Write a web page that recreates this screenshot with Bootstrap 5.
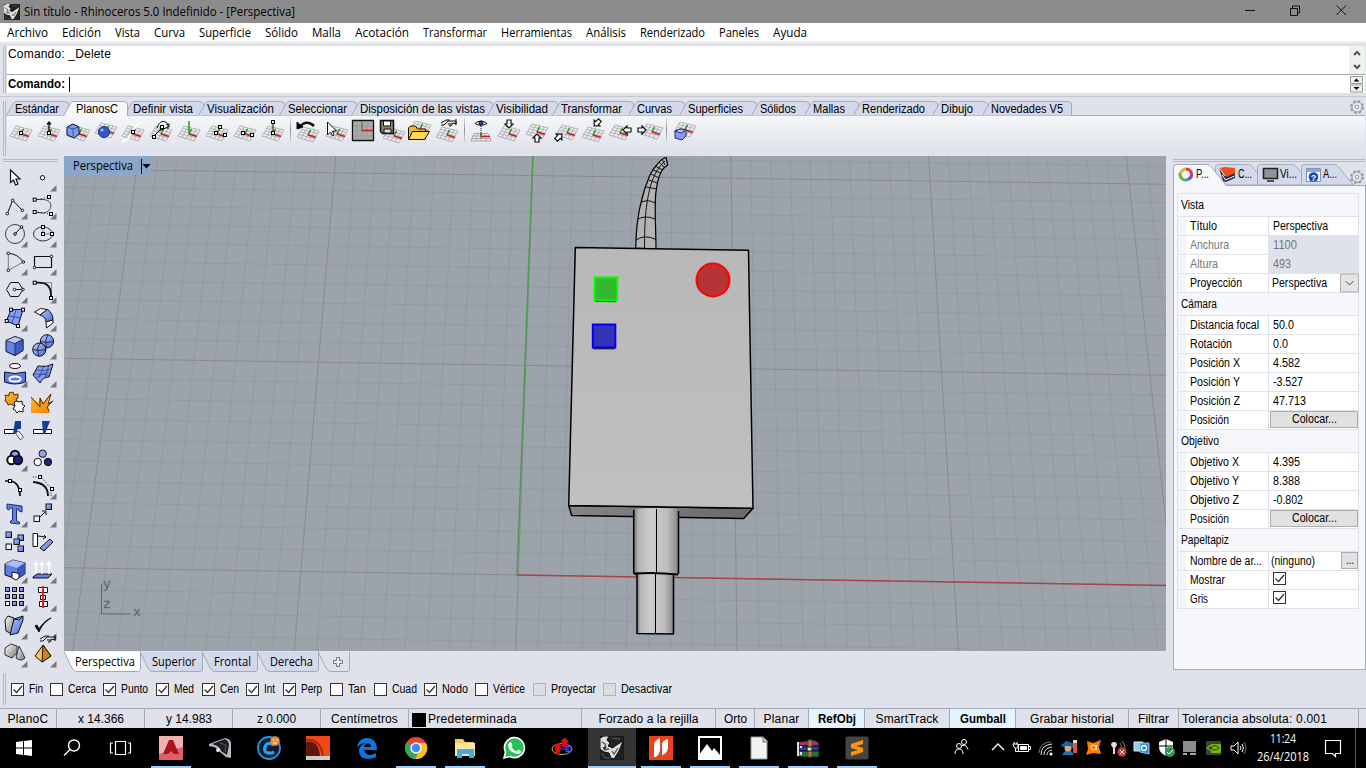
<!DOCTYPE html>
<html lang="es">
<head>
<meta charset="utf-8">
<title>Sin título - Rhinoceros 5.0 Indefinido</title>
<link href="https://cdn.jsdelivr.net/npm/bootstrap@5.3.0/dist/css/bootstrap.min.css" rel="stylesheet">
<style>
:root{--chrome:#dfe2ea;--edge:#a3a9b8;--tabc:#d3d9ea}
body{width:1366px;height:768px;overflow:hidden;background:var(--chrome);color:#000;font:12px/16px "Liberation Sans",sans-serif}
svg{display:block;flex:none;overflow:visible}
.segoe{font-family:"Open Sans",sans-serif}
.txt{white-space:nowrap;display:inline-block;transform-origin:0 50%}
.titlebar{height:23px;background:#8c8c8c}
.menubar{height:20px;background:#fff;border-bottom:2px solid #f0f0f0}
.menubar .cell{flex:none}
.cmd{height:53px;padding:3px 1px 3px 3px}
.grip{width:3px;border-left:1px solid #b4b9c5;border-right:1px solid #b4b9c5;margin-right:1px;flex:none}
.history{height:29px;background:#fff;border-bottom:1px solid var(--edge)}
.prompt-line{height:18px;background:#fff;font-weight:bold}
.ribbon{height:60px;border-top:1px solid #c3c8d4;padding:4px 1px 0 3px}
.tabs-top{height:15px;border-bottom:1px solid var(--edge)}
.tabshape{position:absolute;left:0;top:0}
.onTop{position:relative;z-index:1}
.tools-top{height:40px;padding-top:1px;background:linear-gradient(#f6f7f9,#dfe2ea 85%)}
.sep{width:6px;height:26px}
.sep::before{content:"";display:block;width:1px;height:26px;margin-left:3px;background:linear-gradient(#dfe2ea,#8c8f98,#dfe2ea)}
.main{height:517px}
.left{width:64px;padding-top:3px}
.hgrip{height:3px;width:55px;margin-left:3px;border-top:1px solid #b4b9c5;border-bottom:1px solid #b4b9c5}
.toolgrid{display:grid;grid-template-columns:29px 29px;grid-auto-rows:28px;margin-top:2px}
.view{width:1102px;height:495px;position:relative;background:#9da3ab}
.viewlabel{position:absolute;left:0;top:0;width:87px;height:19px;background:#8ba6c8;padding:2px 0 0 9px}
.right{width:193px;margin-left:7px;padding-top:3px}
.rtabs{height:21px;margin-top:2px}
.panel{height:485px;border:1px solid var(--edge);background:#f6f7fa;padding:7px 5px 0 3px}
.props{border:1px solid var(--chrome);width:182px;height:416px}
.phead{height:23px;padding:3px;border-bottom:1px solid var(--chrome)}
.prow{height:19px;border-bottom:1px solid var(--chrome);background:#fff;line-height:18px}
.prow .gut{width:8px;background:#f3f5f9}
.prow .nam{width:83px;padding-left:4px;border-right:1px solid var(--chrome)}
.prow .val{padding-left:4px;flex:1}
.dis{color:#74767c}.dis .val{background:var(--chrome)}
.flatbtn{border:1px solid #adadad;background:#e1e1e1;height:17px;line-height:15px;margin-left:1px;flex:1;text-align:center}
.osnap{height:35px;padding:0 0 3px 3px}
.chk{width:13px;height:13px;border:1px solid #333;background:#fff;flex:none}
.chk.off{border-color:#b4b4b4;background:#dcdddf}
.status{height:20px;border-top:1px solid var(--edge);font-size:12px;line-height:20px}
.status .cell{border-right:1px solid var(--edge);flex:none}
.status .hot{background:#e5f3ff;font-weight:bold}
.task{height:40px;background:#000;color:#fff}
.task .app{width:49px;height:40px;padding-top:8px;position:relative;flex:none}
.task .run{box-shadow:inset 0 -2px #99cdfa;width:40px;margin:0 4.5px}
.task .run2{background:#343434;width:48px;box-shadow:inset 0 -2px #99cdfa;margin:0 .5px}
</style>
</head>
<body class="d-flex flex-column">
<header class="titlebar d-flex align-items-center segoe">
  <svg class="ms-1" width="16" height="16" viewBox="0 0 24 24"><use href="#rhino"/></svg>
  <span class="txt" data-w="271" style="margin-left:4px">Sin título - Rhinoceros 5.0 Indefinido - [Perspectiva]</span>
  <svg class="ms-auto" width="124" height="23" fill="none" stroke="#111"><path d="M3 10.5h10M48.500 8.500h7v7h-7zM50.500 8v-2h7v7h-2M94.500 5.500l9.500 9.500M104 5.500l-9.500 9.500"/></svg>
</header>
<nav class="menubar d-flex segoe" id="menu"></nav>
<section class="cmd d-flex">
  <div class="grip"></div>
  <div class="flex-fill">
    <div class="history d-flex"><span class="txt" data-w="103" style="margin-left:1px">Comando: _Delete</span>
      <svg class="ms-auto" width="16" height="28"><rect width="16" height="28" fill="#f0f0f0"/><path d="M5 9l3-3 3 3M5 19l3 3 3-3" fill="none" stroke="#505050" stroke-width="2"/></svg></div>
    <div class="prompt-line d-flex align-items-center"><span class="txt" data-w="57" style="margin-left:1px">Comando:</span><i style="width:1px;height:15px;background:#000;margin-left:4px"></i>
      <svg class="ms-auto" width="16" height="19"><path d="M1.500 1.500h12v7h-12zM1.500 10h12v7h-12z" fill="#f0f0f0" stroke="#999"/><path d="M4.500 6.500h6l-3-3zM4.500 12h6l-3 3z"/></svg></div>
  </div>
</section>
<section class="ribbon d-flex">
  <div class="grip"></div>
  <div class="flex-fill">
    <div class="tabs-top d-flex" id="toptabs"></div>
    <div class="tools-top d-flex" id="toptools"></div>
  </div>
</section>
<main class="main d-flex">
  <aside class="left flex-shrink-0"><div class="hgrip"></div><div class="toolgrid" id="lefttools"></div></aside>
  <div class="d-flex flex-column flex-shrink-0">
    <div class="view">
      <svg width="1102" height="495" viewBox="64 156 1102 495" style="overflow:hidden">
        <defs>
          <linearGradient id="cyl"><stop offset="0" stop-color="#777"/><stop offset=".1" stop-color="#b5b5b5"/><stop offset=".38" stop-color="#ccccd0"/><stop offset=".75" stop-color="#bdbdbd"/><stop offset=".93" stop-color="#989898"/><stop offset="1" stop-color="#777"/></linearGradient>
          <linearGradient id="face" x2="0" y2="1"><stop stop-color="#b8b8b9"/><stop offset="1" stop-color="#c0c0c2"/></linearGradient>
          <linearGradient id="under"><stop stop-color="#858585"/><stop offset="1" stop-color="#6b6b6b"/></linearGradient>
        </defs>
        <g id="grid" fill="none"></g>
        <path d="M532.800 156L517 575" stroke="#4a9f4e" stroke-width="1.500"/><path d="M517 575L1166 585.500" stroke="#ab4448" stroke-width="1.500"/>
        <g stroke="#000" stroke-linejoin="round">
          <path fill="#b3b3b4" stroke-width="1.200" d="M635.700 248C636 238 636.500 229 637.700 220C639 210 640 206 641.700 200C644 190 645 187 648 180C650 174 653 169 656.700 165Q661 159 666 157.500L667.700 165C664 167 662 170 660.700 173C658 178 657.500 182 656.700 187C655.500 193 655.300 198 655.300 203C655 220 656 235 656 249z"/>
          <path fill="none" stroke-width=".9" d="M644.500 248C644.500 220 646 205 649.500 190C652 179 657 168 665 161M636 240q9-6 20-.5M638 219q8-4 17 0M641.500 202q7-3 13.500 1M646 187l11 2M648.500 180l9 3M651 174l8 4M653 170l8 3M655.500 166l7 4M659 162l5 5M662 159l3 6"/>
          <path fill="url(#under)" stroke-width="1.500" d="M568.700 505.500L753 508.200L743.700 518.500L571.700 515.500z"/>
          <path fill="url(#face)" stroke-width="1.500" d="M575.300 247.500L748.500 250.300L753 508.200L568.700 505.500z"/>
          <path fill="url(#cyl)" stroke="none" d="M636.700 573h37v61l-37-.5z"/><path fill="none" stroke-width="1.500" d="M637 574v59.500l36.500.5V574"/><path d="M655.500 574v60"/>
          <path fill="url(#cyl)" stroke="none" d="M634 509q22-2 44.500 0v65h-44.500z"/><path fill="none" stroke-width="1.500" d="M633.700 510v63l2.500 1.500M678.500 511v63"/>
          <path fill="none" stroke-width="1" d="M656.500 509v64"/><path fill="none" stroke-width="2" d="M634 573.500q22-1.500 44 1"/>
        </g>
        <path d="M594.800 277.500h22.500l-.3 23-22.500-.5z" fill="#32b931" stroke="#0f0" stroke-width="2"/><path d="M595 301.300l21 .5" stroke="#080"/>
        <path d="M592.800 324.500h22.500v23h-22.500z" fill="#3333b8" stroke="#00f" stroke-width="2"/><path d="M593 348.800h22" stroke="#002"/>
        <circle cx="713" cy="280" r="16.500" fill="#b83335" stroke="#f00" stroke-width="2"/>
        <path d="M101.500 584v30h29" fill="none" stroke="#63666b"/>
        <g fill="#63666b" font-family="Liberation Mono,monospace" font-size="13" stroke="#63666b" stroke-width=".3"><text x="103" y="588">y</text><text x="103" y="608">z</text><text x="133" y="616">x</text></g>
      </svg>
      <div class="viewlabel d-flex segoe"><span class="txt" data-w="60">Perspectiva</span><svg width="20" height="18"><path d="M8.500 1v15" stroke="#000"/><path d="M9.500 6h8l-4 4.500z"/></svg></div>
    </div>
    <div class="d-flex segoe" id="viewtabs"></div>
  </div>
  <aside class="right flex-shrink-0">
    <div class="hgrip" style="width:192px;margin-left:0"></div>
    <div class="rtabs d-flex">
      <svg width="193" height="21" viewBox="1173 164 193 21">
        <g stroke="#a3a9b8">
          <path fill="#d3d9ea" d="M1301.500 185V167q0-2.500 3-2.500h30q2 0 4 2.500l15 18z"/>
          <path fill="#d3d9ea" d="M1257.500 185V167q0-2.500 3-2.500h32q2 0 4 2.500l5 6v12z"/>
          <path fill="#d3d9ea" d="M1215.500 185V167q0-2.500 3-2.500h30q2 0 4 2.500l5 6v12z"/>
          <path fill="#f6f7fa" d="M1173.500 186V167q0-2.500 3-2.500h31q2 0 4 2.500l15 19"/>
        </g>
        <g fill="none" stroke-width="3"><path stroke="#e33" d="M1186 169a5.500 5.500 0 0 1 5.500 5.500"/><path stroke="#e5b730" d="M1181 172.500a5.500 5.500 0 0 1 5-3.500"/><path stroke="#6bb63c" d="M1186 180a5.500 5.500 0 0 1-5.500-7.500"/><path stroke="#3798cf" d="M1186 180a5.500 5.500 0 0 0 4-2"/><path stroke="#9c3fae" d="M1189 179a5.500 5.500 0 0 0 2.500-5"/></g>
        <path d="M1219 168l4 13 3 1 9-4v-5l-11 3z" fill="#272d48"/><path d="M1220 168l5-1 10 1v5l-9 4z" fill="#f14e1e"/><path d="M1222 175l3.500 5 9-4" stroke="#fff" fill="none"/>
        <path d="M1263.500 168.500h14v10h-14z" fill="#8d949b" stroke="#222" stroke-width="1.600"/><path d="M1267 181h7" stroke="#222" stroke-width="1.500"/>
        <path d="M1306.500 168.500h14v13h-14z" fill="#fff" stroke="#8091c6"/><path d="M1307 169h13v3h-13z" fill="#91a5dc"/><circle cx="1313.500" cy="177" r="4.800" fill="#1748b8"/><text x="1310.800" y="180.500" fill="#fff" font-size="9" font-weight="bold">?</text>
        <g font-size="12"><text x="1196" y="178" textLength="13" lengthAdjust="spacingAndGlyphs">P...</text><text x="1238" y="178" textLength="14" lengthAdjust="spacingAndGlyphs">C...</text><text x="1280" y="178" textLength="17" lengthAdjust="spacingAndGlyphs">Vi...</text><text x="1323" y="178" textLength="14" lengthAdjust="spacingAndGlyphs">A...</text></g>
        <use href="#gear" x="1350" y="170"/>
      </svg>
    </div>
    <div class="panel"><div class="props" id="props"></div></div>
  </aside>
</main>
<section class="osnap d-flex"><div class="grip"></div><div class="d-flex align-items-center" id="osnap"></div></section>
<section class="status d-flex" id="status"></section>
<footer class="task d-flex segoe" id="task"></footer>

<svg width="0" height="0" class="position-absolute">
  <defs>
    <symbol id="gear" width="14" height="14" viewBox="0 0 14 14"><circle cx="7" cy="7" r="6" fill="none" stroke="#8f939a" stroke-width="1.600" stroke-dasharray="2.700 2.010"/><circle cx="7" cy="7" r="5" fill="#e4e6eb" stroke="#9a9ea5"/><circle cx="7" cy="7" r="1.700" fill="#fff" stroke="#8f939a"/></symbol>
    <symbol id="rhino" width="24" height="24" viewBox="0 0 24 24"><rect width="24" height="24" fill="#222"/><path d="M0 2l4-2h5L7 4l3 3-2 3 5 2 2-2 8-5-4 10-5 8-3-1-2-5-5-1-4-3z" fill="#ddd"/><path d="M2 6l3 2 1 4M12 15l2 3 4-6M4 14l5-1" stroke="#555" fill="none" stroke-width="1.300"/><path d="M1 17l4 5h5M12 2l8 1" stroke="#5a5a5a" fill="none"/><circle cx="4.500" cy="12" r="1" fill="#b22"/></symbol>
    <symbol id="mesh" width="28" height="28" viewBox="0 0 28 28"><path d="M9 9l16 4M8 11.500l15.500 4M6.500 14l15.500 4M5 16.500l15.500 4M3 19l16 5M9 9L3 19M13 10L7 20.500M17 11l-6 11M21 12l-6 11M25 13l-6 11" fill="none" stroke="#a9abaf" stroke-width=".9"/><path d="M14 17l2.500-5" stroke="#149614" stroke-width="1.400"/><path d="M14 17l8 2.500" stroke="#d3161c" stroke-width="1.600"/></symbol>
    <linearGradient id="bl" x2="1" y2="1"><stop stop-color="#b8caff"/><stop offset="1" stop-color="#4668dc"/></linearGradient>
    <linearGradient id="or" x2="1" y2="1"><stop stop-color="#ffc52a"/><stop offset="1" stop-color="#ee7b08"/></linearGradient>
    <linearGradient id="gr" x2="1" y2="1"><stop stop-color="#fff"/><stop offset="1" stop-color="#777"/></linearGradient>
  </defs>
</svg>
<script src="https://cdn.jsdelivr.net/npm/bootstrap@5.3.0/dist/js/bootstrap.bundle.min.js"></script>
<script>
const $ = id => document.getElementById(id);
const put = (id, html) => { $(id).innerHTML = html; };
const svg = (body, s = 28) => `<svg width="${s}" height="${s}" viewBox="0 0 ${s} ${s}" fill="none" stroke="#111">${body}</svg>`;
const sq = (...p) => p.map(([x, y, f]) => `<rect x="${x - 1.5}" y="${y - 1.5}" width="3" height="3" fill="${f || '#fff'}" stroke="#000"/>`).join('');
const dot = (...p) => p.map(([x, y]) => `<circle cx="${x}" cy="${y}" r="1.300" fill="#fff"/>`).join('');
const mesh = (x = 0, y = 0) => `<use href="#mesh" x="${x}" y="${y}"/>`;
const text = (t, w) => `<span class="txt" data-w="${w}">${t}</span>`;

/* menu: label, left edge, text width */
let rows = [['Archivo',7,41],['Edición',62,39],['Vista',115,25],['Curva',154,31],['Superficie',199,52],['Sólido',265,33],['Malla',312,29],['Acotación',355,54],['Transformar',423,64],['Herramientas',501,71],['Análisis',586,40],['Renderizado',640,65],['Paneles',719,40],['Ayuda',773,34]];
put('menu', rows.map(([t, x, w], i) => `<div class="cell" style="width:${(rows[i+1] ? rows[i+1][1] : 820) - x}px;${i ? '' : 'margin-left:7px;'}padding-top:2px">${text(t, w)}</div>`).join(''));

/* toolbar tabs: label, text left, text width */
rows = [['Estándar',15,44],['PlanosC',76,42],['Definir vista',133,60],['Visualización',207,67],['Seleccionar',288,59],['Disposición de las vistas',360,125],['Visibilidad',496,52],['Transformar',561,61],['Curvas',637,35],['Superficies',688,55],['Sólidos',760,36],['Mallas',813,32],['Renderizado',862,63],['Dibujo',941,32],['Novedades V5',991,72],['',1075,0]];
put('toptabs', rows.slice(0, -1).map(([t, x, w], i) => {
  const a = i == 1, s = a ? x - 12 : x - 8, n = rows[i+1][1] - (i == 0 ? 12 : 8), W = n - s, e = W + (a ? 2.5 : 4.5);
  return `<div class="position-relative flex-shrink-0 ${a ? 'onTop' : ''}" style="width:${W}px"><svg class="tabshape" width="${e + 1}" height="15"><path d="M-.5 ${a ? 15 : 14.5}L6.500 2Q7.500 .500 10 .500H${e - 4}Q${e} .500 ${e} 3.500V${a ? 15 : 14.5}" fill="${a ? '#f6f7f9' : '#d3d9ea'}" stroke="#a3a9b8"/></svg><span class="txt position-relative" data-w="${w}" style="margin-left:${x - s}px">${t}</span></div>`;
}).join('') + `<svg class="ms-auto" width="15" height="14"><use href="#gear" x="0" y="-1"/></svg>`);

/* icon pieces */
const cube = (x, y, k = 1) => `<g transform="translate(${x} ${y}) scale(${k})"><path d="M0 4L9 0l8 3v11l-8 5-9-4z" fill="#6383ec"/><path d="M0 4l9 3 8-4L9 0z" fill="#b9c9ff" stroke-width=".6"/><path d="M9 7v12l8-5V3z" fill="#3e5dcb" stroke-width=".6"/></g>`;
const ball = (x, y, r) => `<circle cx="${x}" cy="${y}" r="${r}" fill="url(#bl)"/>`;
const hand = (x, y) => `<path transform="translate(${x} ${y})" d="M1 6h3l4-4h8v3l-3-1-2 3-2 0M1 4l5-3h4M8 5h4M16 0v6" fill="#ddd" stroke-width="1"/>`;
const arrow = (x, y, r) => `<path transform="translate(${x} ${y}) rotate(${r})" d="M-2-4h4v4h2L0 4-4 0H-2z" fill="#fff" stroke-width="1.200"/>`;
const T = [
 mesh() + sq([14,16]),
 mesh() + `<path d="M14 15V5M12 7.500L14 5l2 2.500" stroke-width="1.400"/>` + sq([14,16]),
 mesh(2) + `<path d="M4 10l6-3 6 3v7l-5 4-7-3z" fill="#7c9bf0"/><path d="M4 10l6 2v9M10 12l6-2" stroke="#3553ad"/>`,
 mesh(1,-3) + `<circle cx="13" cy="15" r="5.500" fill="#3559ca" stroke="#1c2f78"/><circle cx="11" cy="13" r="1.500" fill="#a8bcff" stroke="none"/>`,
 mesh() + `<path d="M3 24C14 24 12 8 22 6" stroke="#fff" stroke-width="2"/>` + sq([14,15]),
 mesh() + `<path d="M10 11C12 4 17 3 20 6M12 14L23 9M19 7l4 1M21 6v6M6 20L16 10" stroke-width="1"/>` + sq([7,20],[15,10]),
 mesh() + `<path d="M14 16V4" stroke="#149614" stroke-width="1.400"/>`,
 mesh() + sq([17,10],[13,16],[22,18]), mesh() + sq([12,16],[21,18]),
 mesh() + `<path d="M14 16V6"/>` + sq([14,5],[14,16]), 0,
 mesh(1,1) + `<path d="M7 10C10 5 16 4 21 9" stroke-width="2.500"/><path d="M4 12V5l6 5z" fill="#000"/>`,
 mesh(2) + `<path d="M6.500 5v13l3-3 2 4 1.500-1-1.500-4h4z" fill="#fff"/>`,
 `<path d="M3.500 3.500h21v20h-21z" fill="#aaa" stroke-width="1.300"/><path d="M4 9h20M4 14h20M4 19h20M8 4v19M13 4v19M18 4v19" stroke="#999"/><path d="M13 4v10" stroke="#149614"/><path d="M13 13.500h11" stroke="#d3161c" stroke-width="1.500"/>`,
 mesh(3,2) + `<path d="M3.500 3.500h13v13H5.500l-2-2z" fill="#87826a" stroke-width="1.500"/><path d="M6.500 4h7v5h-7z" fill="#fff"/><path d="M7 12h7v4H7z" fill="#ddd"/>`,
 mesh(1,-5) + `<path d="M3.500 22V11l2-2h5l2 3h8v10z" fill="#edb73b"/><path d="M3.500 22.500l4-8h17l-5 8z" fill="#ffd956"/>`,
 mesh(0,1) + hand(7,2), 0,
 `<path d="M7 16.500h14M5.500 19h17M4.500 21.500h19M4 24h20M7 16.500L4 24M10.500 16.500L9 24M14 16v8M17.500 16.500L19 24M21 16.500l3 7.500" stroke="#a9abaf"/><path d="M14 16v5" stroke="#149614" stroke-width="1.400"/><path d="M14 19.500h9" stroke="#d3161c" stroke-width="1.500"/><path d="M14 9v10" stroke-dasharray="1 1"/><path d="M8 6.500Q14 1.500 20 6.500Q14 10 8 6.500z" fill="#fff"/><circle cx="14" cy="6" r="2" fill="#2446bd"/>`,
 mesh() + arrow(14,7,0), mesh(0,-2) + arrow(14,21,180), mesh(2,-1) + arrow(8,20,225), mesh(0,1) + arrow(18,6,45), mesh(-1,-1) + arrow(20,13,90), mesh(3,-2) + arrow(7,13,270), 0,
 mesh(2,-4) + `<path d="M6 14l5-2 6 1v6l-4 4-7-2z" fill="#8c98f6" stroke="#262c7a"/><path d="M6 14l6 2 5-3-6-1z" fill="#c3c9ff" stroke="#262c7a"/>`
];
put('toptools', T.map(b => b ? svg(b) : '<div class="sep"></div>').join(''));

const tri = '<path d="M27.500 21v6.500H21z" fill="#77797f" stroke="none"/>';
const bsq = (x, y, f = 'url(#bl)') => `<rect x="${x}" y="${y}" width="5.500" height="5.500" fill="${f}" stroke="#111"/>`;
const L = [
 [`<path d="M10.500 6v12.500l3-2.500 2 5 2.500-1-2-5h4z" fill="#fff" stroke-width="1.200"/>`,0], [`<circle cx="13.500" cy="13.700" r="2.200" fill="#fff"/>`,1],
 [`<path d="M7.300 21.700l5.400-13.400 9.600 10"/>` + dot([7.3,21.7],[12.7,8.3],[22.3,18.3]),1],
 [`<path d="M6 7.500h8C25 8 24 20 14 21l-8-1" stroke="#444"/><path d="M6 8L20 5M6 20l16 2" stroke-dasharray="1 2"/>` + sq([5.7,7.7],[20,5],[5.7,20],[22,22]),1],
 [`<circle cx="15" cy="14" r="9.500" stroke="#444"/><path d="M15 14l6.500-7"/>` + dot([15,14],[21.5,7]),1],
 [`<ellipse cx="14" cy="14" rx="9.500" ry="7" stroke="#333"/><path d="M14 7v7h9" stroke="#777"/>` + sq([14,14],[14,7],[23,14]),1],
 [`<path d="M8.300 22.300v-17" stroke="#777"/><path d="M8.300 5.300Q18 6 23.300 14"/><path d="M8.300 22.300l15-8.300" stroke="#777"/>` + dot([8.3,5.3],[23.3,14],[8.3,22.3]),1],
 [`<path d="M5.500 8.500h17v11h-17z" stroke-width="1.200"/>` + dot([5.5,19.5],[22.5,8.5]),1],
 [`<path d="M6.500 13.500l4-7h8l4.500 7-4.500 7h-8z"/><path d="M14.500 13.500H23"/>` + dot([14.5,13.5],[23,13.5]),1],
 [`<path d="M7 6.500h15.500v14" stroke="#888"/><path d="M7 6.700C17 6 22 9 22 20" stroke-width="1.800"/>` + sq([5.7,6.7],[22,22]),1],
 [`<path d="M11 5.500h12L18 22 6.500 17z" fill="#829cf4"/><path d="M16 6l-4 13M9 12l12 2" stroke="#3953b0"/>` + sq([11,5.7],[23,5.7],[18,22],[6.7,17]),1],
 [`<path d="M5.500 8l6-3.500 7 1L11 11z" fill="#fff"/><path d="M11 11l7.500-5.500Q24 9 24 16l-7 2q0-5-6-7z" fill="url(#bl)"/><path d="M17 18l7-2v3l-6.500 5z" fill="#fff"/>`,1],
 [cube(6,4.5),1],
 [ball(18,9.3,6.6) + ball(10.3,17.6,6.6) + `<path d="M11.500 9.500q6 2 13 0M4 17.500q6 2 13 0M19 3q-4 6-1 13M11 11q-4 6-1 13" stroke-width=".8"/>`,1],
 [`<ellipse cx="15" cy="6" rx="5.500" ry="2.500" fill="#fff"/><path d="M4.500 12q10.500 3 21 0v10q-10.500 4-21 0z" fill="#5778e8"/><ellipse cx="15" cy="19" rx="5.500" ry="2.500" stroke="#fff" stroke-width="2"/>`,1],
 [`<path d="M4 15l5-9q7 2 15-2l-4 13q-6 0-9 6z" fill="#829cf4"/><path d="M7 10q7 2 15-1M5 14q8 1 15-2M10 18l5-13M16 18l4-13M7 18q6-6 14-2" stroke="#2f438f" stroke-width=".8"/>`,1],
 [`<path d="M9 5l4-1 1 3 4-1v4l-2 1 2 3-3 1-1 3-3-2-3 1-1-3-2-1 1-3-1-3 4 1z" fill="url(#or)" stroke="#5b3300"/><path d="M16 13l3 1 3-1v3l3 2-2 2v4l-4-1-2 2-2-3-2-1 2-3-1-3z" fill="#fff"/>`,0],
 [`<path d="M2 25V9l7 6 2-6 3 6 7-9-3 9 6-2-5 6 2 6z" fill="url(#or)" stroke="none"/><path d="M2 9l9 10V10l3 6 8-10-3 10 5-3-6 6 2 4" stroke="#4a2c00"/>`,0],
 [`<path d="M4.500 13.500h12v4h-12z" fill="#fff"/><path d="M21 5v8h-3l-3 5h-2l2-13z" fill="#173b9c" stroke="none"/><path d="M15.500 17l3-2 5 6-3 3z" fill="#eee" stroke="#555"/>`,0],
 [`<path d="M4.500 13.500h18v4h-18z" fill="#fff"/><path d="M21 5l-5 13h-2l-1-13z" fill="#173b9c" stroke="none"/>`,0],
 [`<g stroke-width="2"><circle cx="15" cy="11" r="4.200" fill="#929ff1"/><circle cx="11.500" cy="16" r="4.200" fill="#fff"/><circle cx="18" cy="16" r="4.200" fill="#1c2187"/></g>`,1],
 [`<circle cx="13.700" cy="9.700" r="3.700" fill="#929ff1"/><circle cx="8.700" cy="18" r="3.700" fill="#fff"/><circle cx="19" cy="18" r="3.700" fill="#1c2187"/>`,0],
 [`<path d="M5 9h6q9 2 9 15" stroke-width="1.700"/>` + sq([10,9],[20,18]),0],
 [`<path d="M4 10q15 1 15 14" stroke-width="1.800"/><path d="M4 5h8l10 11v8" stroke-dasharray="1 1.500"/>` + sq([11,5],[23,17]),1],
 [`<path d="M7 4l15 2v6l-3-1-1-2-1.500 0v12l3 1v2l-9-1v-2l2-1V8l-2.500 0-1 2-2-1z" fill="#5f7fe6" stroke="#173272"/>`,1],
 [bsq(17,4) + bsq(5,16,'#eee') + `<path d="M11 17l5-5M13 11h4v4"/>`,1],
 [bsq(6,4)+bsq(18,7)+bsq(14,11)+bsq(6,16,'#eee')+bsq(18,18),0],
 [`<path d="M4 5.500h4.500v13H4z" fill="#fff"/><path d="M9 8l8 1-2-2M17 9l-3 2"/><path d="M11 20L21 11l3 3-9 9z" fill="url(#bl)"/>`,0],
 [`<path d="M5 8l8-4 12 3v11l-8 5-12-4z" fill="#5f7fe6"/><path d="M5 8l12 4 8-5-12-3z" fill="#a9bdfd" stroke="none"/><path d="M17 12v11l8-5V7z" fill="#3a56bd" stroke="none"/><path d="M12 16l5 1 2 1v4l-3 2-4-2z" fill="#fff"/>`,1],
 [`<path d="M4 21l4-3h15l-4 4H4z" fill="#5f7fe6"/><path d="M7 18V6M13 18V6M20 18V6M5 9l2-3 2 3M11 9l2-3 2 3M18 9l2-3 2 3" stroke="#fff" stroke-width="1.500"/>`,1],
 [[5,12,19].map(x => [3,10,17].map(y => `<rect x="${x}.5" y="${y}.5" width="4" height="4" fill="${x==5&&y==17?'#fff':'url(#bl)'}"/>`).join('')).join(''),1],
 [`<path d="M9.500 3.500h9v5h-9zM11.500 11.500h5v4h-5zM10.500 17.500h8v5h-8z" fill="#fff"/><path d="M14 2v22" stroke="#d8222a" stroke-width="2"/>`,1],
 [`<path d="M5 8l3-4 6 2-2 16-6-3z" fill="url(#gr)"/><path d="M14 7l9-3v4l-5 13-8 2z" fill="url(#bl)"/><path d="M14 7l5 1 4-4"/>`,1],
 [`<path d="M6 14l4 6C13 13 17 9 22 6c-5 2-9 6-12 11l-2-4z" fill="#000"/>`,1],
 [`<path d="M5 8l6-4 6 2v7l-5 5-7-3z" fill="url(#gr)" stroke="#333"/><path d="M19 6l6 12q-4 4-9 0z" fill="url(#gr)" stroke="#333"/>`,1],
 [hand(10,-5) + `<path d="M6 16l8-11 8 11-9 6z" fill="#ffc246"/><path d="M14 5l-1 17 9-6z" fill="#cf8415"/>`,1]
];
put('lefttools', L.map(([b, t]) => svg(b + (t ? tri : ''))).join(''));

/* construction plane grid */
let minor = '', major = '';
for (let k = -30; k <= 40; k++) { const s = `M${533.4 + 19.76*k} 156L${515.6 + 22.14*k} 651`; k % 10 ? minor += s : major += s; }
for (let j = -4; j <= 21; j++) { const s = `M64 ${567.7 - 21.95*j + .101*j*j}L1166 ${585.3 - 21.95*j + .095*j*j}`; j % 10 ? minor += s : major += s; }
put('grid', `<path d="${minor}" stroke="#92989f" stroke-width=".8"/><path d="${major}" stroke="#86878e" stroke-width=".9"/>`);

/* viewport tabs: label, width, text width, colour */
put('viewtabs', [['Perspectiva',76,60,'#fff',10],['Superior',62,44,'#d3d9ea',11],['Frontal',55,37,'#d3d9ea',11],['Derecha',61,43,'#d3d9ea',12],['',31,0,'#dfe2ea',0]].map(([t,w,tw,c,p],i) =>
 `<div class="position-relative" style="width:${w}px;height:22px;z-index:${5-i};${i?'':'margin-left:1px'}"><svg class="tabshape" width="${w}" height="21"><path d="M-1 .500L7 17Q9 20.500 12 20.500H${w-3}Q${w-.5} 20.500 ${w-.5} 18V.500" fill="${c}" stroke="#a3a9b8"/>${t?'':'<path d="M17.500 6.500h3v3h3v3h-3v3h-3v-3h-3v-3h3z" fill="#eee" stroke="#777"/>'}</svg>${t ? `<span class="txt position-relative" data-w="${tw}" style="margin:3px 0 0 ${p}px">${t}</span>` : ''}</div>`).join(''));

/* properties: name, name width, value, value width, kind */
const tick = '<svg width="11" height="11" fill="none" stroke="#333" stroke-width="1.300"><path d="M1.500 5.500l3 3 5.500-6.500"/></svg>';
const P = [['Vista',23],['Título',27,'Perspectiva',55],['Anchura',39,'1100',24,'dis'],['Altura',28,'493',18,'dis'],['Proyección',52,'Perspectiva',55,'sel'],
 ['Cámara',36],['Distancia focal',69,'50.0',21],['Rotación',42,'0.0',15],['Posición X',50,'4.582',27],['Posición Y',50,'-3.527',30],['Posición Z',50,'47.713',33],['Posición',39,'Colocar...',45,'btn'],
 ['Objetivo',38],['Objetivo X',49,'4.395',27],['Objetivo Y',49,'8.388',27],['Objetivo Z',49,'-0.802',30],['Posición',39,'Colocar...',45,'btn'],
 ['Papeltapiz',48],['Nombre de ar...',72,'(ninguno)',44,'dots'],['Mostrar',35,'',0,'chk'],['Gris',18,'',0,'chk']];
put('props', P.map(([n,w,v,vw,k]) => {
  if (v === undefined) return `<div class="phead">${text(n,w)}</div>`;
  let c = `<div class="val d-flex" style="${k=='sel'?'padding-left:3px':k=='dots'?'padding-left:2px':''}">${k=='chk' ? `<i class="chk" style="margin-top:1px">${tick}</i>` : text(v,vw)}`;
  if (k == 'sel') c += '<svg class="ms-auto" width="18" height="18"><path d="M.5 0h18v18H.5z" fill="#e4e4e4" stroke="#adadad"/><path d="M5.500 7l4 4 4-4" fill="none" stroke="#444"/></svg>';
  if (k == 'dots') c += '<div class="flatbtn ms-auto flex-grow-0 flex-shrink-0" style="flex-basis:17px">' + text('...', 8) + '</div>';
  c += '</div>';
  if (k == 'btn') c = `<div class="flatbtn">${text(v,vw)}</div>`;
  return `<div class="prow d-flex ${k=='dis'?'dis':''}"><div class="gut"></div><div class="nam">${text(n,w)}</div>${c}</div>`;
}).join(''));

/* object snaps: label, box left, text width, state */
rows = [['Fin',11,14,1],['Cerca',50,28,0],['Punto',103,27,1],['Med',156,20,1],['Cen',202,19,1],['Int',246,11,1],['Perp',283,21,1],['Tan',330,18,0],['Cuad',374,25,0],['Nodo',424,26,1],['Vértice',475,32,0],['Proyectar',533,45,2],['Desactivar',603,51,2],['',700,0,0]];
put('osnap', rows.slice(0,-1).map(([t,x,w,s],i) => `<div class="d-flex align-items-center" style="width:${rows[i+1][1]-x}px;${i?'':'margin-left:4px'}"><i class="chk ${s==2?'off':''}">${s==1?tick:''}</i><span class="txt" data-w="${w}" style="margin-left:5px">${t}</span></div>`).join(''));

/* status bar: label, right edge, text width, highlighted */
let px = 0;
put('status', [['PlanoC',57,41],['x 14.366',145,46],['y 14.983',233,46],['z 0.000',321,39],['Centímetros',409,67],['Predeterminada',582,89,0,'l'],['Forzado a la rejilla',716,100],['Orto',755,23],['Planar',809,36],['RefObj',865,38,1],['SmartTrack',950,63],['Gumball',1016,46,1],['Grabar historial',1129,84],['Filtrar',1179,31],['Tolerancia absoluta: 0.001',1359,145,0,'t']].map(([t,r,w,h,k]) => {
  const W = r - px, o = `<div class="cell d-flex ${k ? '' : 'justify-content-center'} ${h?'hot':''}" style="width:${W}px;${k?'padding-left:3px':''}">${k=='l'?'<i style="width:14px;height:14px;background:#000;margin:4px 2px 0 0"></i>':''}${text(t,w)}</div>`; px = r; return o;
}).join(''));

/* taskbar */
const A = [
 ['<path d="M4 6l7-1v6.500H4zM12 5l8-1v7.500h-8zM4 12.500h7V19l-7-1zM12 12.500h8V20l-8-1z" fill="#fff" stroke="none"/>','s'],
 ['<circle cx="14" cy="9.500" r="5.500" stroke="#fff" stroke-width="1.400"/><path d="M10 13.500l-6 6" stroke="#fff" stroke-width="1.400"/>','s'],
 ['<path d="M7.500 5.500h10v13h-10zM5 7H2.500v10H5M20 7h2.500v10H20" stroke="#fff" stroke-width="1.200"/>','s'],
 ['<rect width="24" height="24" fill="#df5f66" stroke="none"/><path d="M0 0h24v11L0 18z" fill="#eeb0b0" stroke="none"/><path d="M4 18L10 4h4l6 14h-5l-3-3-3 3z" fill="#a6151c" stroke="none"/>','run'],
 ['<path d="M1 8L17 2q6 1 6 5v15l-5-1-6-5q-2-5-11-6z" fill="#b9bcc1" stroke="none"/><path d="M4 8l13-5q4 2 4 6l-2 10-6-4q-1-5-9-7z" fill="#1d1e26" stroke="none"/><circle cx="10" cy="14" r="2" fill="#eee" stroke="none"/><path d="M12 7l6 2-1 7" stroke="#555"/>',''],
 ['<circle cx="12" cy="12" r="11" fill="#101c26" stroke="#1f95dc" stroke-width="1.800"/><path d="M17 9q-7-4-9 2-2 7 7 6l2-1" stroke="#22a5f0" stroke-width="3.200"/><circle cx="18" cy="5" r="4.800" fill="#e58a35" stroke="none"/><path d="M15.500 4h1.500M19 4h1.500M16 7h4" stroke="#fff"/>',''],
 ['<rect width="24" height="20" fill="#f04818" stroke="none"/><path d="M0 6Q12 3 14 20H0z" fill="#5f170b" stroke="none"/><path d="M0 4Q14 2 17 20" fill="none" stroke="#a52a12" stroke-width="2"/><path d="M0 20h24v4H0z" fill="#ccc" stroke="none"/>',''],
 ['<path d="M2 12C3 4 8 2 12 2c7 0 10 5 10 12H9c1 6 7 6 12 3v4c-6 3-17 3-17-6 0-5 4-7 7-8-5 0-8 3-9 5zM9 11h7c0-5-6-5-7 0z" fill="#0a78da" stroke="none" fill-rule="evenodd"/>',''],
 ['<circle cx="12" cy="12" r="11" fill="#e84537" stroke="none"/><path d="M12 12L2.500 6.500A11 11 0 0 0 11 23l5-9z" fill="#33a853" stroke="none"/><path d="M12 7h10a11 11 0 0 1-11 16l5-9z" fill="#fbc116" stroke="none"/><circle cx="12" cy="12" r="5" fill="#4688f4" stroke="#fff" stroke-width="1.300"/>','run'],
 ['<path d="M2 3h8l2 3h9v14H2z" fill="#f4c95c" stroke="none"/><path d="M2 7h20v13H2z" fill="#ffe49b" stroke="none"/><path d="M4 22v-9h17v9h-5v-4h-7v4z" fill="#38afe9" stroke="none"/>','run'],
 ['<path d="M2 22l1.500-6A10 10 0 1 1 8 20.500z" fill="#25c056" stroke="#fff" stroke-width="1.600"/><path d="M7.500 6.500h2l1 3-1 1.500q2 3.500 5 4.500l1.500-2 3 1.500q0 3-3 3-9-1-10-9z" fill="#fff" stroke="none"/>',''],
 ['<ellipse cx="11" cy="13" rx="10" ry="5.500" stroke="#ccb800"/><path d="M4 9l4-2 2 3-2 7H5zM11 4l3-2 3 3-3 6-3-1z" fill="#e31010" stroke="#d00"/><path d="M8 13h10M17 8v11" stroke="#2b2bdf" stroke-width="1.300"/><path d="M15 10.500h5v5h-5z" stroke="#55f"/>',''],
 ['<use href="#rhino"/>','run2'],
 ['<rect width="24" height="24" fill="#e84320" stroke="none"/><path d="M5 9q0-4 6-7v12q-1 5-4 7H5zM13 8q1-4 6-5v9q-1 6-6 7z" fill="#fff" stroke="none"/>','run'],
 ['<rect x="1" y="1" width="22" height="22" fill="#000" stroke="#fff" stroke-width="2"/><path d="M1 19l8-11 5 7 2-3 6 7v4H1z" fill="#fff" stroke="none"/>','run'],
 ['<path d="M4 1h12l4 4v18H4z" fill="#f2f2f2" stroke="#999"/><path d="M16 1v5h5" fill="#ccc" stroke="#777"/>','run'],
 ['<path d="M1 6l17-2 5 3v3H4z" fill="#9e3572"/><path d="M1 10h22v5H3z" fill="#2739a5"/><path d="M1 15h22v6H3z" fill="#20773c"/><path d="M2 6v14M5 10v2M5 16v3" stroke="#ddd" stroke-width="2"/><path d="M12 4h4v17h-4z" fill="#a58245" stroke="#5d4520"/><rect x="11" y="11" width="5" height="4" fill="#ddd"/>','run'],
 ['<rect x=".5" y=".5" width="23" height="23" rx="2" fill="#454545" stroke="none"/><path d="M6 8l12-4v4l-7 2 7 2v4L6 20v-4l7-2-7-2z" fill="#ff9800" stroke="none"/>','run']
];
const tray = [
 ['<path d="M5 18q0-5 4-5t4 5"/><circle cx="9" cy="10" r="2.500"/><circle cx="14" cy="6" r="2.500"/><path d="M12 9.500q5-1 6 4"/>',36],
 ['<path d="M6 14l6-6 6 6" stroke-width="1.400"/>',24],
 ['<path d="M8.500 8.500h10v7h-10zM19 10.500h1.500v3H19M3 8h5v3q-2 3-4 0zM4 6v2M7 6v2M5.500 12v3.500h3"/><path d="M10.500 10.500h6v3h-6z" fill="#fff"/>',24],
 ['<path d="M7 19q0-10 11-11M10 19q0-7 8-8M13 19q0-4 5-5" stroke="#ddd"/><path d="M5 17Q6 6 17 6" stroke="#777"/><circle cx="17" cy="18" r="1.500" fill="#fff" stroke="none"/>',24],
 ['<path d="M3 10l5-5 9 3-3 4zM4 19q6-10 12 0z" fill="#1974bd" stroke="none"/><circle cx="10" cy="12" r="3.500" fill="#dba782" stroke="none"/><path d="M4 10q6-4 12 1" stroke="#1d5d96" stroke-width="3"/><path d="M15 5h4v12h-4z" fill="#d95246" stroke="none"/><path d="M15 4h4v3h-4z" fill="#ddd" stroke="none"/>',24],
 ['<path d="M5 5l6 2 8-3-2 7 2 7-8-1-7 2 2-6z" fill="#ff7b00" stroke="none"/><circle cx="11.500" cy="11.500" r="2.500"/><path d="M14.500 9v5"/>',24],
 ['<path d="M5 9q0-3 3-3t3 3l-2 3v6H7v-6z" fill="#ddd" stroke="none"/><path d="M14 7q3 3 0 7M16 5q5 6 2 12" stroke="#777"/><circle cx="16" cy="16" r="4.500" fill="#cf3e32" stroke="none"/><path d="M14 14l4 4M18 14l-4 4"/>',24],
 ['<path d="M4 6h9v9H4z" fill="#9cc8e7" stroke="#ddeefa"/><path d="M10 7h9v11l-9-2z" fill="#208bd6" stroke="#8cceff"/><circle cx="14" cy="12" r="2.500" stroke="#fff" stroke-width="1.300"/>',24],
 ['<path d="M12 3l7 3v5q0 6-7 9-7-3-7-9V6z" fill="#fff" stroke="none"/><path d="M12 3v17M5 10h14" stroke="#000"/><circle cx="16" cy="16" r="5" fill="#2a9b54" stroke="none"/><path d="M13 16l2 2 4-4"/>',24],
 ['<path d="M5 5h13v11H5z" fill="#8c8c8c" stroke="none"/><path d="M5 18h4M12 18h6" stroke="#aaa" stroke-width="2"/>',24],
 ['<path d="M4 5h15v14H4z" fill="#3a4048" stroke="none"/><path d="M9 8h10v9H9z" fill="#75b900" stroke="none"/><path d="M5 12q6-6 12 0-6 5-12 0z" stroke="#75b900" stroke-width="1.200"/><path d="M9 12q3-5 8 0-5 4-8 0" stroke="#153d05"/>',24],
 ['<path d="M5 10h3l4-4v12l-4-4H5zM14 10q2 2 0 4M16 8q3 4 0 8"/><path d="M18 6q4 6 0 12" stroke="#777"/>',24]
];
put('task', A.map(([b,k],i) => `<div class="app ${k=='run'?'run':k=='run2'?'run2':''} d-flex justify-content-center" style="${i<3?'width:48px;':''}${i==3?'margin-left:7px':''}">${svg(b,24)}</div>`).join('')
 + `<div class="d-flex align-items-start" style="margin-left:68px;padding-top:8px">${tray.map(([b,w])=>`<div style="width:${w}px">${svg(b,24).replace('#111','#fff')}</div>`).join('')}</div>`
 + `<div class="text-center flex-shrink-0" style="width:66px;line-height:18px;padding-top:2px"><div>${text('11:24',26)}</div><div>${text('26/4/2018',52)}</div></div>`
 + `<svg width="54" height="40" fill="none" stroke="#fff" style="margin-left:-2px"><path d="M11.500 12.500h15v13h-5v3l-3-3h-7z" stroke-width="1.200"/><path d="M41.500 0v40" stroke="#555"/></svg>`);

/* fit every label to its nominal width: condense when too wide, track out when too narrow */
document.querySelectorAll('[data-w]').forEach(e => {
  const n = e.textContent.length, w = e.getBoundingClientRect().width, t = +e.dataset.w;
  if (!n) return;
  if (t < w) { e.style.transform = `scaleX(${t / w})`; e.style.marginRight = `${t - w}px`; }
  else e.style.letterSpacing = (t - w) / n + 'px';
});
</script>
</body>
</html>
